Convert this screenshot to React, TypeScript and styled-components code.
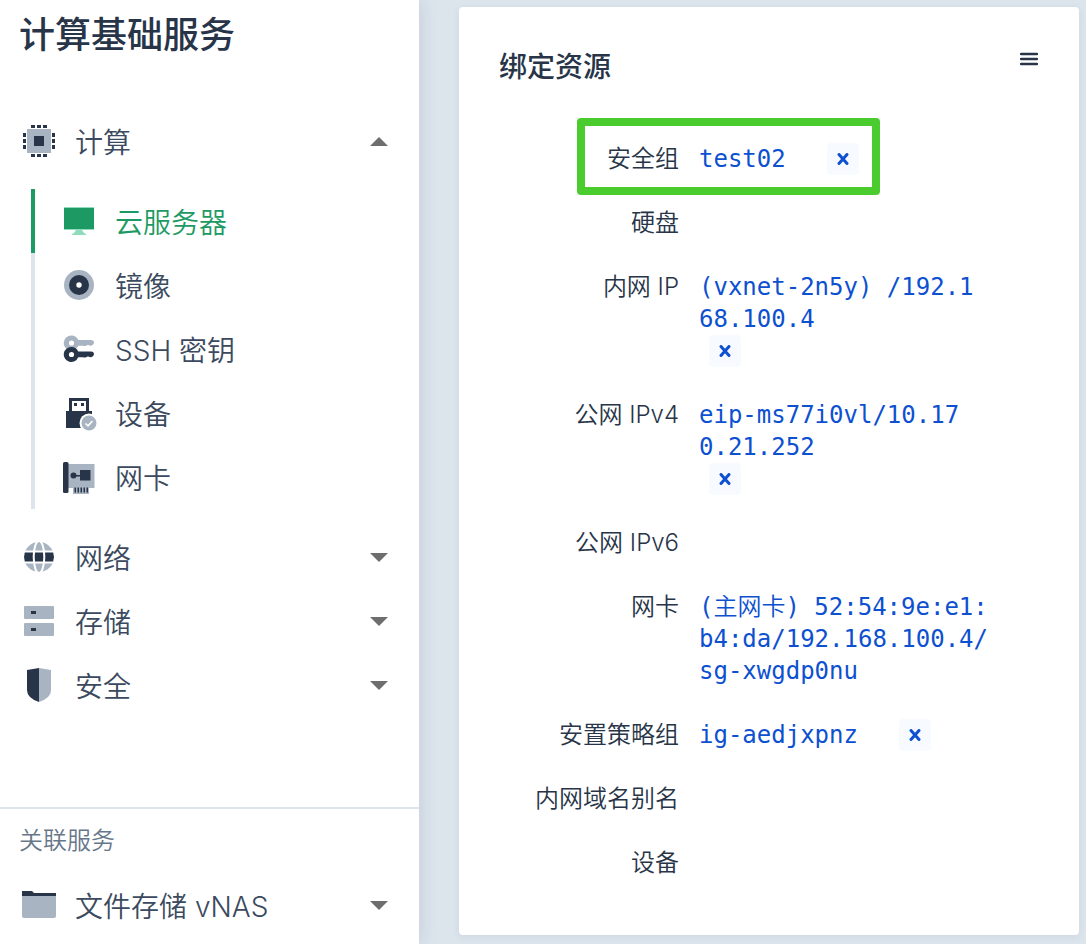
import React from "react";
import styled, { createGlobalStyle } from "styled-components";

const sans = `Inter, "Noto Sans CJK SC", sans-serif`;
const mono = `"DejaVu Sans Mono", "Noto Sans CJK SC", monospace`;

const ink = "#283548";
const text = "#3b4a5e";
const slate = "#a8b4c2";
const green = "#1d9a63";
const line = "#dce4ec";
const blue = "#0d50d0";

const GlobalStyle = createGlobalStyle`
  * { box-sizing: border-box; }
  body { margin: 0; font-family: ${sans}; font-weight: 350; color: ${ink}; background: ${line}; }
  button { border: 0; padding: 0; margin: 0; background: none; font: inherit; color: inherit; cursor: pointer; }
  a { color: inherit; text-decoration: none; }
  h1, h2, h3, ul, dl, dd { margin: 0; padding: 0; }
  ul { list-style: none; }
`;

const Page = styled.div`
  display: flex;
  min-height: 100vh;
`;

const Sidebar = styled.aside`
  flex: 0 0 419px;
  background: #fff;
  box-shadow: 2px 0 16px rgba(50, 80, 110, 0.13);
`;

const ServiceTitle = styled.h1`
  padding: 10px 19px 0;
  font-size: 36px;
  line-height: 50px;
  font-weight: 500;
`;

const Nav = styled.nav`
  padding-top: 49px;
`;

const GroupButton = styled.button`
  display: flex;
  align-items: center;
  gap: 20px;
  width: 100%;
  height: 64px;
  padding: 0 31px 0 23px;
  font-size: 28px;
  color: ${text};
  text-align: left;
`;

const GroupName = styled.span`
  flex: 1;
`;

const Caret = styled.span<{ $up?: boolean }>`
  border: 9px solid transparent;
  border-width: ${(p) => (p.$up ? "0 9px 9px" : "9px 9px 0")};
  border-color: ${(p) => (p.$up ? "transparent transparent #6e6e6f" : "#6e6e6f transparent transparent")};
`;

const SubList = styled.ul`
  margin: 16px 0 16px 31px;
`;

const SubLink = styled.a<{ $active?: boolean }>`
  display: flex;
  align-items: center;
  gap: 20px;
  height: 64px;
  padding-left: 28px;
  border-left: 4px solid ${(p) => (p.$active ? green : line)};
  color: ${(p) => (p.$active ? green : text)};
  font-size: 28px;
`;

const Related = styled.section`
  margin-top: 90px;
  border-top: 2px solid ${line};
`;

const RelatedTitle = styled.h2`
  padding: 16px 19px;
  font-size: 24px;
  line-height: 32px;
  font-weight: 350;
  color: #67778a;
`;

const Main = styled.main`
  flex: 1;
  min-width: 0;
  padding: 7px 7px 9px 40px;
`;

const Card = styled.section`
  height: 100%;
  padding: 40px 40px 56px;
  background: #fff;
  border-radius: 4px;
  box-shadow: 0 2px 8px rgba(50, 80, 110, 0.08);
`;

const CardHead = styled.header`
  display: flex;
  justify-content: space-between;
  align-items: flex-start;
  margin-bottom: 56px;
`;

const CardTitle = styled.h2`
  font-size: 28px;
  line-height: 40px;
  font-weight: 500;
`;

const MenuButton = styled.button`
  display: grid;
  place-items: center;
  width: 20px;
  height: 24px;
`;

const Fields = styled.dl`
  display: grid;
  gap: 32px;
`;

const Field = styled.div`
  position: relative;
  display: grid;
  grid-template-columns: 180px 1fr;
  column-gap: 20px;
  min-height: 32px;
  font-size: 24px;
  line-height: 32px;
`;

const Label = styled.dt`
  text-align: right;
  white-space: nowrap;
`;

const Value = styled.dd<{ $stacked?: boolean }>`
  display: flex;
  flex-direction: ${(p) => (p.$stacked ? "column" : "row")};
  align-items: flex-start;
  column-gap: 41px;
  font-family: ${mono};
  color: ${blue};
`;

const ValueLink = styled.a`
  white-space: pre-line;
`;

const RemoveButton = styled.button<{ $stacked?: boolean }>`
  display: grid;
  place-items: center;
  width: 32px;
  height: 32px;
  margin-left: ${(p) => (p.$stacked ? "10px" : "0")};
  border-radius: 4px;
  background: #f7faff;
`;

const Highlight = styled.span`
  position: absolute;
  top: -25px;
  left: 78px;
  width: 303px;
  height: 77px;
  border: 8px solid #4bcc2e;
  border-radius: 4px;
  pointer-events: none;
`;

const Svg = ({ children }: { children: React.ReactNode }) => (
  <svg width="32" height="32" viewBox="0 0 32 32" aria-hidden="true">
    {children}
  </svg>
);

const ChipIcon = () => (
  <Svg>
    <path
      fill={ink}
      d="M8 0h4v3H8zM14 0h4v3h-4zM20 0h4v3h-4zM8 29h4v3H8zM14 29h4v3h-4zM20 29h4v3h-4zM0 8h3v4H0zM0 14h3v4H0zM0 20h3v4H0zM29 8h3v4h-3zM29 14h3v4h-3zM29 20h3v4h-3z"
    />
    <path fill={slate} d="M4 4h24v24H4z" />
    <path fill={ink} d="M11 11h10v10H11z" />
  </Svg>
);

const MonitorIcon = () => (
  <Svg>
    <path fill="#8fdcbc" d="M1 2h30v1H1zM1 24h30v1H1zM13 25h6l2 3 2 1v1H9v-1l2-1z" />
    <path fill={green} d="M1 3h30v21H1z" />
  </Svg>
);

const DiscIcon = () => (
  <Svg>
    <circle cx="16" cy="16" r="15" fill={slate} />
    <circle cx="16" cy="16" r="10" fill={ink} />
    <circle cx="16" cy="16" r="2.7" fill="#fff" />
  </Svg>
);

const keyShape =
  "M8.500 0a7.500 7.500 0 0 1 6.700 4.500H28Q31 4.700 31 7.500 30.500 9.800 28 10.200q-2 0-3-1-2.500 2-5 1h-4.800A7.500 7.500 0 1 1 8.500 0zM8.500 4.900a2.600 2.600 0 1 0 0 5.200 2.600 2.600 0 0 0 0-5.200z";

const KeysIcon = () => (
  <Svg>
    <path fill={slate} fillRule="evenodd" d={keyShape} transform="translate(0 2.500)" />
    <path fill={ink} fillRule="evenodd" d={keyShape} transform="translate(0 14)" />
  </Svg>
);

const UsbIcon = () => (
  <Svg>
    <path fill={ink} d="M6 1h20v13h3v17H3V14h3z" />
    <path fill="#fff" d="M9 4h14v10H9z" />
    <path fill={ink} d="M11 6h3v3h-3zM18 6h3v3h-3z" />
    <circle cx="26" cy="26" r="9.500" fill="#fff" />
    <circle cx="26" cy="26" r="7.500" fill={slate} />
    <path d="M22.500 26.500l2.500 2.300 4.500-4.800" fill="none" stroke="#fff" strokeWidth="1.600" />
  </Svg>
);

const NicIcon = () => (
  <Svg>
    <path fill={slate} d="M5 3h26.500v24H26v6H10v-6H5z" />
    <path fill={ink} d="M1.500 1H4q1.500 0 1.500 1.500v28Q5.500 32 4 32H1.500Q0 32 0 30.500v-28Q0 1 1.500 1z" />
    <circle cx="10.500" cy="14.500" r="3" fill={ink} />
    <path
      fill={ink}
      d="M11 14h7v1.500h-7zM17 9h10.500v10.500H17zM11.500 26.500H13v5h-1.500zM14.500 26.500H16v5h-1.500zM17.500 26.500H19v5h-1.500zM20.500 26.500H22v5h-1.500zM23.500 26.500H25v5h-1.500z"
    />
  </Svg>
);

const GlobeIcon = () => (
  <Svg>
    <circle cx="16" cy="16" r="15" fill={slate} />
    <path d="M0 9.500h32v13H0z" fill="#fff" />
    <path d="M1.800 11.500h28.400q1.600 4.500 0 9H1.800q-1.600-4.500 0-9z" fill={ink} />
    <ellipse cx="16" cy="16" rx="5.300" ry="16" fill="none" stroke="#fff" strokeWidth="2" />
  </Svg>
);

const StorageIcon = () => (
  <Svg>
    <rect x="1" y="1" width="30" height="13" rx="1" fill={slate} />
    <rect x="1" y="18" width="30" height="13" rx="1" fill={slate} />
    <path fill={ink} d="M8 6h5v3H8zM8 23h5v3H8z" />
  </Svg>
);

const ShieldIcon = () => (
  <Svg>
    <path fill={ink} d="M16-1v34Q4 29 4 21V1z" />
    <path fill={slate} d="M16-1v34q12-4 12-12V1z" />
  </Svg>
);

const FolderIcon = () => (
  <Svg>
    <path fill={slate} d="M-1 6h34v21q0 2-2 2H1q-2 0-2-2z" />
    <path fill={ink} d="M-1 2H9l2 2h22v3H-1z" />
  </Svg>
);

const IconSlot = styled.span`
  flex: 0 0 32px;
  height: 32px;

  svg {
    display: block;
    overflow: visible;
  }
`;

const MenuIcon = () => (
  <svg width="18" height="14" viewBox="0 0 18 14" aria-hidden="true">
    <path d="M1 2h16M1 7h16M1 12h16" stroke={ink} strokeWidth="2.500" strokeLinecap="round" />
  </svg>
);

const CloseIcon = () => (
  <svg width="12" height="12" viewBox="0 0 12 12" aria-hidden="true">
    <path d="M2 1.500l8 9M10 1.500l-8 9" stroke={blue} strokeWidth="3" strokeLinecap="round" />
  </svg>
);

const subItems = [
  { name: "云服务器", icon: <MonitorIcon />, active: true },
  { name: "镜像", icon: <DiscIcon /> },
  { name: "SSH 密钥", icon: <KeysIcon /> },
  { name: "设备", icon: <UsbIcon /> },
  { name: "网卡", icon: <NicIcon /> },
];

type FieldData = {
  label: string;
  value?: string;
  removable?: boolean;
  stacked?: boolean;
  highlighted?: boolean;
};

const fields: FieldData[] = [
  { label: "安全组", value: "test02", removable: true, highlighted: true },
  { label: "硬盘" },
  { label: "内网 IP", value: "(vxnet-2n5y) /192.1\n68.100.4", removable: true, stacked: true },
  { label: "公网 IPv4", value: "eip-ms77i0vl/10.17\n0.21.252", removable: true, stacked: true },
  { label: "公网 IPv6" },
  { label: "网卡", value: "(主网卡) 52:54:9e:e1:\nb4:da/192.168.100.4/\nsg-xwgdp0nu" },
  { label: "安置策略组", value: "ig-aedjxpnz", removable: true },
  { label: "内网域名别名" },
  { label: "设备" },
];

const Group = ({ name, icon, open }: { name: string; icon: React.ReactNode; open?: boolean }) => (
  <GroupButton type="button" aria-expanded={!!open}>
    <IconSlot>{icon}</IconSlot>
    <GroupName>{name}</GroupName>
    <Caret $up={open} />
  </GroupButton>
);

export default function App() {
  return (
    <>
      <GlobalStyle />
      <Page>
        <Sidebar>
          <ServiceTitle>计算基础服务</ServiceTitle>
          <Nav>
            <Group name="计算" icon={<ChipIcon />} open />
            <SubList>
              {subItems.map((item) => (
                <li key={item.name}>
                  <SubLink href="#" $active={item.active}>
                    <IconSlot>{item.icon}</IconSlot>
                    {item.name}
                  </SubLink>
                </li>
              ))}
            </SubList>
            <Group name="网络" icon={<GlobeIcon />} />
            <Group name="存储" icon={<StorageIcon />} />
            <Group name="安全" icon={<ShieldIcon />} />
          </Nav>
          <Related>
            <RelatedTitle>关联服务</RelatedTitle>
            <Group name="文件存储 vNAS" icon={<FolderIcon />} />
          </Related>
        </Sidebar>
        <Main>
          <Card>
            <CardHead>
              <CardTitle>绑定资源</CardTitle>
              <MenuButton type="button" aria-label="菜单">
                <MenuIcon />
              </MenuButton>
            </CardHead>
            <Fields>
              {fields.map((f) => (
                <Field key={f.label}>
                  <Label>{f.label}</Label>
                  <Value $stacked={f.stacked}>
                    {f.value && <ValueLink href="#">{f.value}</ValueLink>}
                    {f.removable && (
                      <RemoveButton type="button" $stacked={f.stacked} aria-label="解绑">
                        <CloseIcon />
                      </RemoveButton>
                    )}
                  </Value>
                  {f.highlighted && <Highlight />}
                </Field>
              ))}
            </Fields>
          </Card>
        </Main>
      </Page>
    </>
  );
}
